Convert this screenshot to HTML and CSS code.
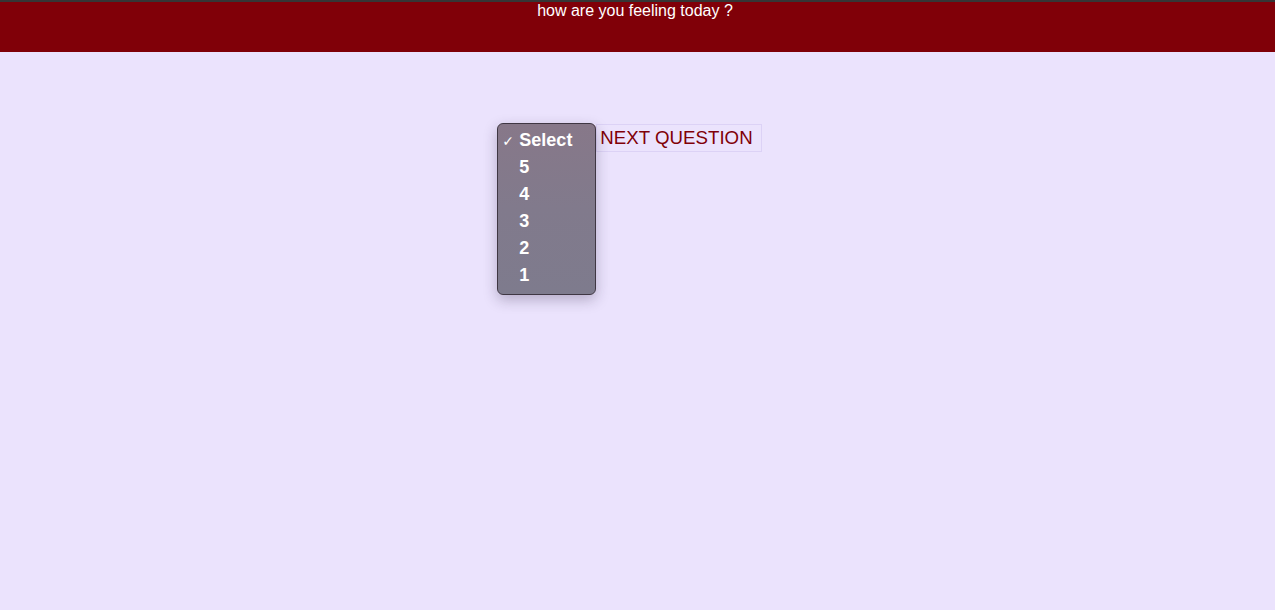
FILE: index.html
```html
<!DOCTYPE html>
<html>
<head>
<meta charset="utf-8">
<link rel="stylesheet" href="styles.css">
</head>
<body>
<header class="topbar">how are you feeling today ?</header>
<main class="content">
  <div class="question">
    <div class="select-wrap">
      <div class="select-box"></div>
      <ul class="menu">
        <li class="item checked"><span class="check">✓</span>Select</li>
        <li class="item">5</li>
        <li class="item">4</li>
        <li class="item">3</li>
        <li class="item">2</li>
        <li class="item">1</li>
      </ul>
    </div>
    <button class="next">NEXT QUESTION</button>
  </div>
</main>
</body>
</html>
```
FILE: styles.css
```css
html, body {
  margin: 0;
  padding: 0;
  height: 100%;
}
body {
  background: #ebe3fd;
  font-family: "Liberation Sans", Arial, Helvetica, sans-serif;
}
.topbar {
  box-sizing: border-box;
  height: 52px;
  background: #800008;
  border-top: 2px solid #363636;
  color: #ffffff;
  font-size: 16px;
  line-height: 18px;
  text-align: center;
  padding-right: 5px;
}
.content {
  padding-top: 72px;
  padding-right: 8px;
  display: flex;
  justify-content: center;
}
.question {
  display: flex;
  align-items: flex-start;
}
.select-wrap {
  position: relative;
  width: 91px;
  height: 26px;
}
.select-box {
  box-sizing: border-box;
  height: 26px;
  border-top: 2px solid #c98a98;
  border-radius: 5px 5px 0 0;
}
.menu {
  position: absolute;
  left: -8px;
  top: -1px;
  box-sizing: border-box;
  width: 99px;
  height: 172px;
  margin: 0;
  padding: 3px 0 6px;
  list-style: none;
  background: linear-gradient(180deg, #877889 0%, #817a8c 50%, #7e7b8d 100%);
  border: 1px solid #3f3743;
  border-radius: 6px;
  box-shadow: 0 5px 14px rgba(40, 30, 60, 0.28);
}
.item {
  position: relative;
  height: 27px;
  line-height: 27px;
  padding-left: 21px;
  color: #ffffff;
  font-weight: bold;
  font-size: 18px;
}
.check {
  position: absolute;
  left: 4px;
  top: 1px;
  font-size: 14px;
  font-weight: normal;
  font-family: "DejaVu Sans", sans-serif;
}
.next {
  box-sizing: border-box;
  height: 28px;
  margin: 0;
  padding: 0 8px 0 3px;
  background: transparent;
  border: 1px solid #dcd2f6;
  color: #800008;
  font-family: "Liberation Sans", Arial, Helvetica, sans-serif;
  font-size: 18.7px;
  line-height: 26px;
  text-align: left;
}
```
